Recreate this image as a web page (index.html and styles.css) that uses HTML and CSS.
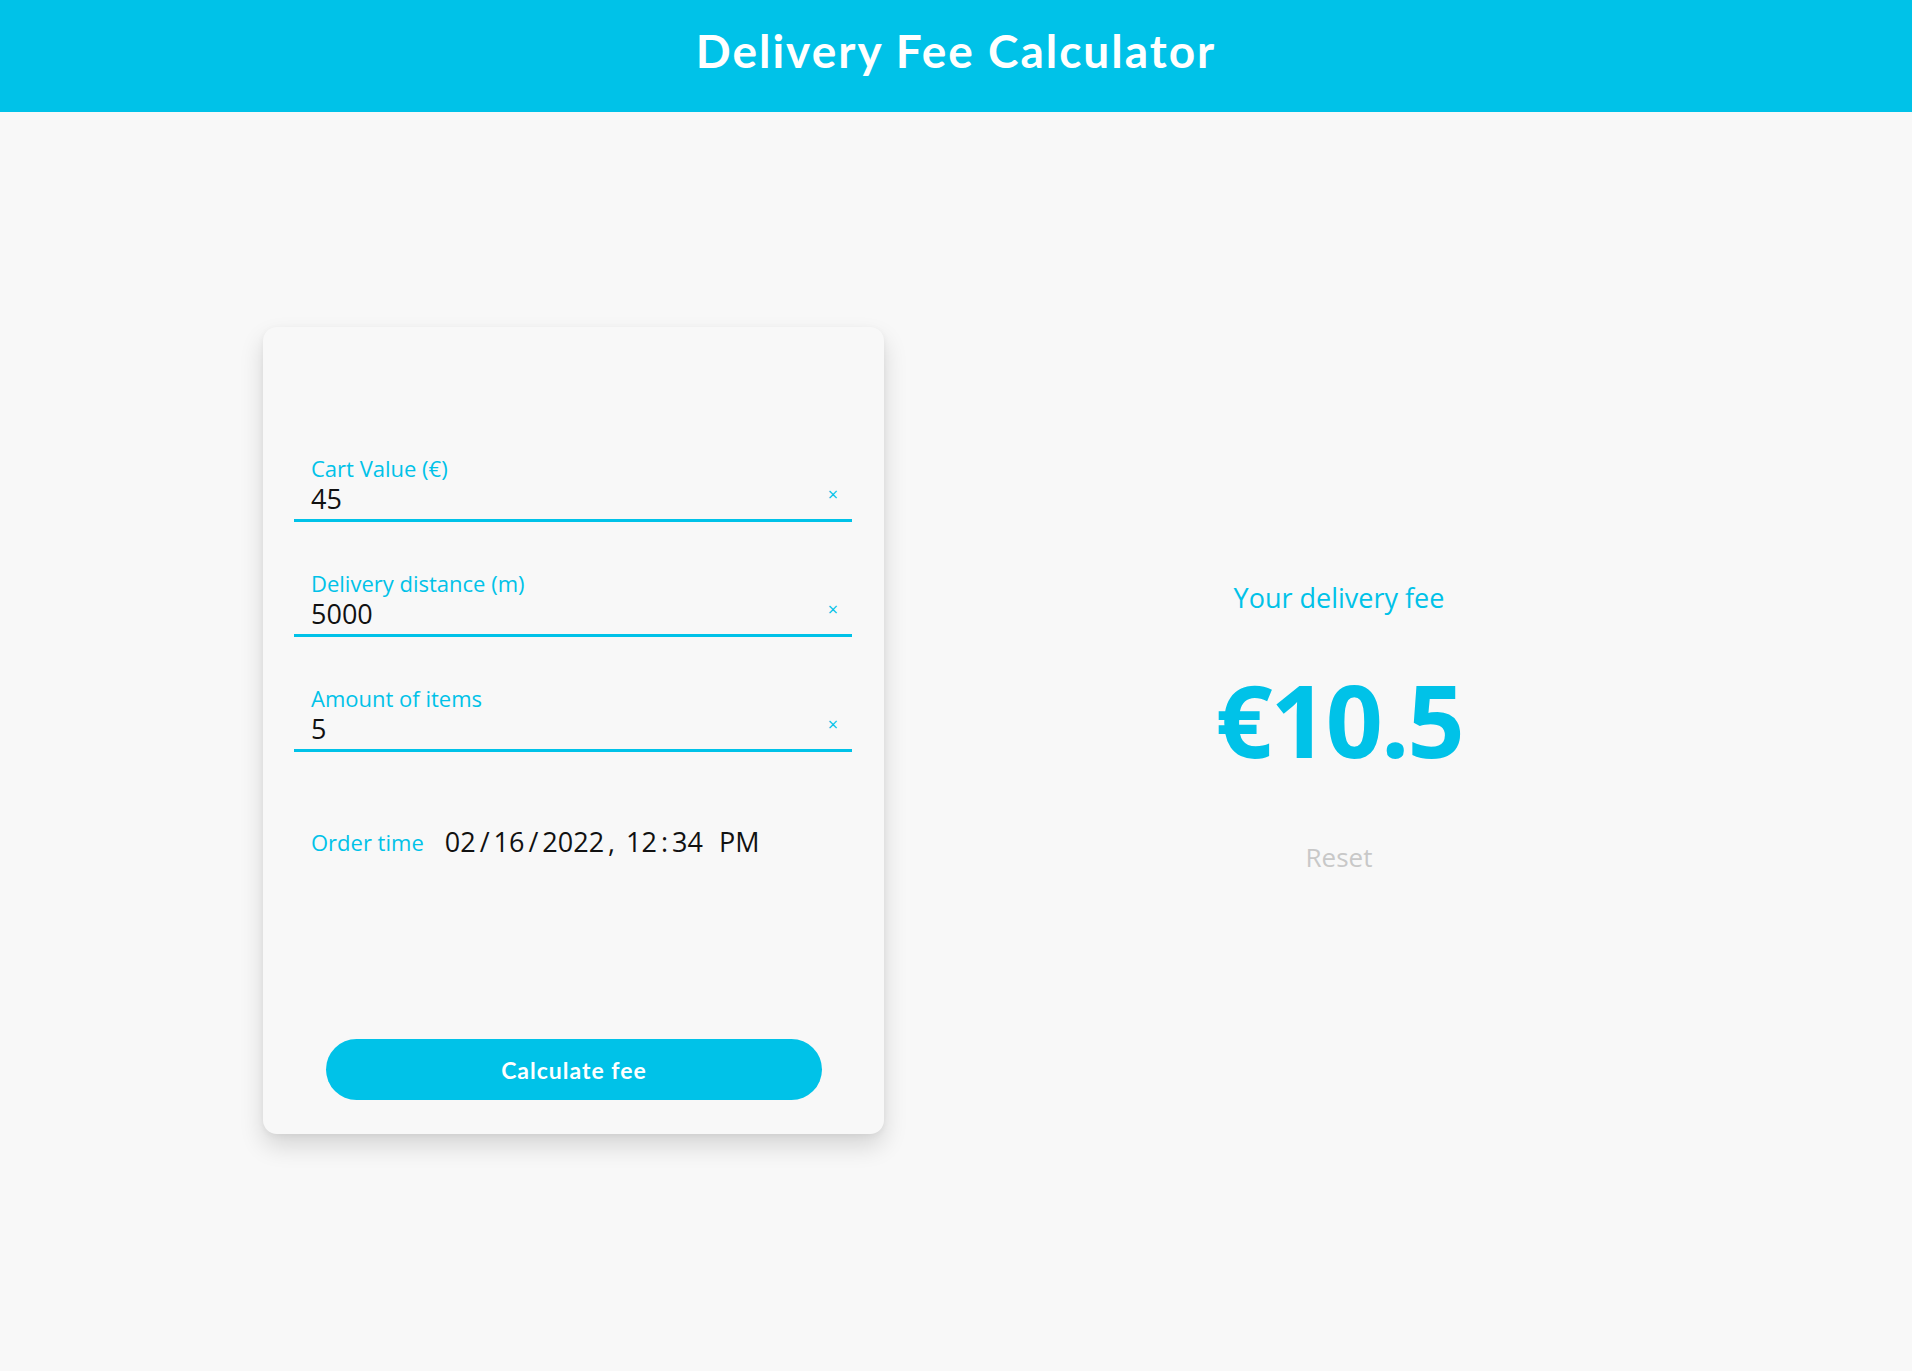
FILE: index.html
```html
<!DOCTYPE html>
<html lang="en">
<head>
<meta charset="utf-8">
<title>Delivery Fee Calculator</title>
<link rel="stylesheet" href="styles.css">
</head>
<body>
<header class="topbar">
  <h1 class="title">Delivery Fee Calculator</h1>
</header>
<main class="main">
  <form class="card">
    <div class="field">
      <label class="field-label">Cart Value (€)</label>
      <div class="field-row">
        <span class="field-value">45</span>
        <span class="clear">×</span>
      </div>
    </div>
    <div class="field">
      <label class="field-label">Delivery distance (m)</label>
      <div class="field-row">
        <span class="field-value">5000</span>
        <span class="clear">×</span>
      </div>
    </div>
    <div class="field">
      <label class="field-label">Amount of items</label>
      <div class="field-row">
        <span class="field-value">5</span>
        <span class="clear">×</span>
      </div>
    </div>
    <div class="time-row">
      <span class="time-label">Order time</span>
      <span class="time-value">02<span class="sep">/</span>16<span class="sep">/</span>2022<span class="sep">,</span> 12<span class="sep">:</span>34 <span class="ampm">PM</span></span>
    </div>
    <button type="button" class="calc-btn">Calculate fee</button>
  </form>
  <section class="result">
    <p class="result-label">Your delivery fee</p>
    <p class="result-fee">€10.5</p>
    <p class="reset">Reset</p>
  </section>
</main>
</body>
</html>
```
FILE: styles.css
```css
* { box-sizing: border-box; }
html, body { margin: 0; padding: 0; }
body {
  background: #f8f8f8;
  font-family: "Open Sans", "Noto Sans", sans-serif;
  height: 1371px;
}
.topbar {
  background: #00c2e8;
  height: 112px;
  display: flex;
  align-items: center;
  justify-content: center;
}
.title {
  margin: 0;
  color: #fff;
  font-family: "Lato", sans-serif;
  font-weight: 700;
  font-size: 46px;
  letter-spacing: 2px;
  padding-bottom: 12px;
}
.main {
  display: flex;
  align-items: center;
  padding: 215px 0 0 263px;
  gap: 145px;
}
.card {
  width: 621px;
  height: 807px;
  border-radius: 14px;
  background: #f8f8f8;
  box-shadow: 0 12px 24px rgba(0,0,0,0.14), 0 2px 6px rgba(0,0,0,0.05);
  padding: 126px 32px 34px 31px;
  display: flex;
  flex-direction: column;
}
.field {
  border-bottom: 3px solid #00c2e8;
  padding: 0 14px 2px 17px;
  margin-bottom: 46px;
}
.field-label {
  display: block;
  color: #00c2e8;
  font-size: 22px;
  line-height: 30px;
}
.field-row {
  display: flex;
  justify-content: space-between;
  align-items: center;
  margin-top: -3px;
}
.field-value {
  font-size: 27px;
  line-height: 37px;
  color: #111;
}
.clear {
  color: #00c2e8;
  font-size: 18px;
  line-height: 24px;
  position: relative;
  top: -5px;
}
.time-row {
  display: flex;
  align-items: center;
  padding-left: 17px;
  margin-top: 25px;
}
.time-label {
  color: #00c2e8;
  font-size: 22px;
  margin-right: 21px;
}
.time-value {
  font-size: 27px;
  color: #111;
}
.sep { margin: 0 4px; }
.ampm { margin-left: 9px; }
.calc-btn {
  margin: auto 0 0 32px;
  width: 496px;
  height: 61px;
  border: none;
  border-radius: 31px;
  background: #00c2e8;
  color: #fff;
  font-family: "Lato", sans-serif;
  font-weight: 700;
  font-size: 23px;
  letter-spacing: 1px;
}
.result {
  width: 620px;
  text-align: center;
  padding-bottom: 6px;
}
.result p { margin: 0; }
.result-label {
  color: #00c2e8;
  font-size: 27px;
  line-height: 36px;
}
.result-fee {
  color: #00c2e8;
  font-size: 100px;
  font-weight: 700;
  line-height: 120px;
  margin-top: 43px !important;
  letter-spacing: -2px;
}
.reset {
  color: #c8c8c8;
  font-size: 26px;
  line-height: 36px;
  margin-top: 60px !important;
}
```
